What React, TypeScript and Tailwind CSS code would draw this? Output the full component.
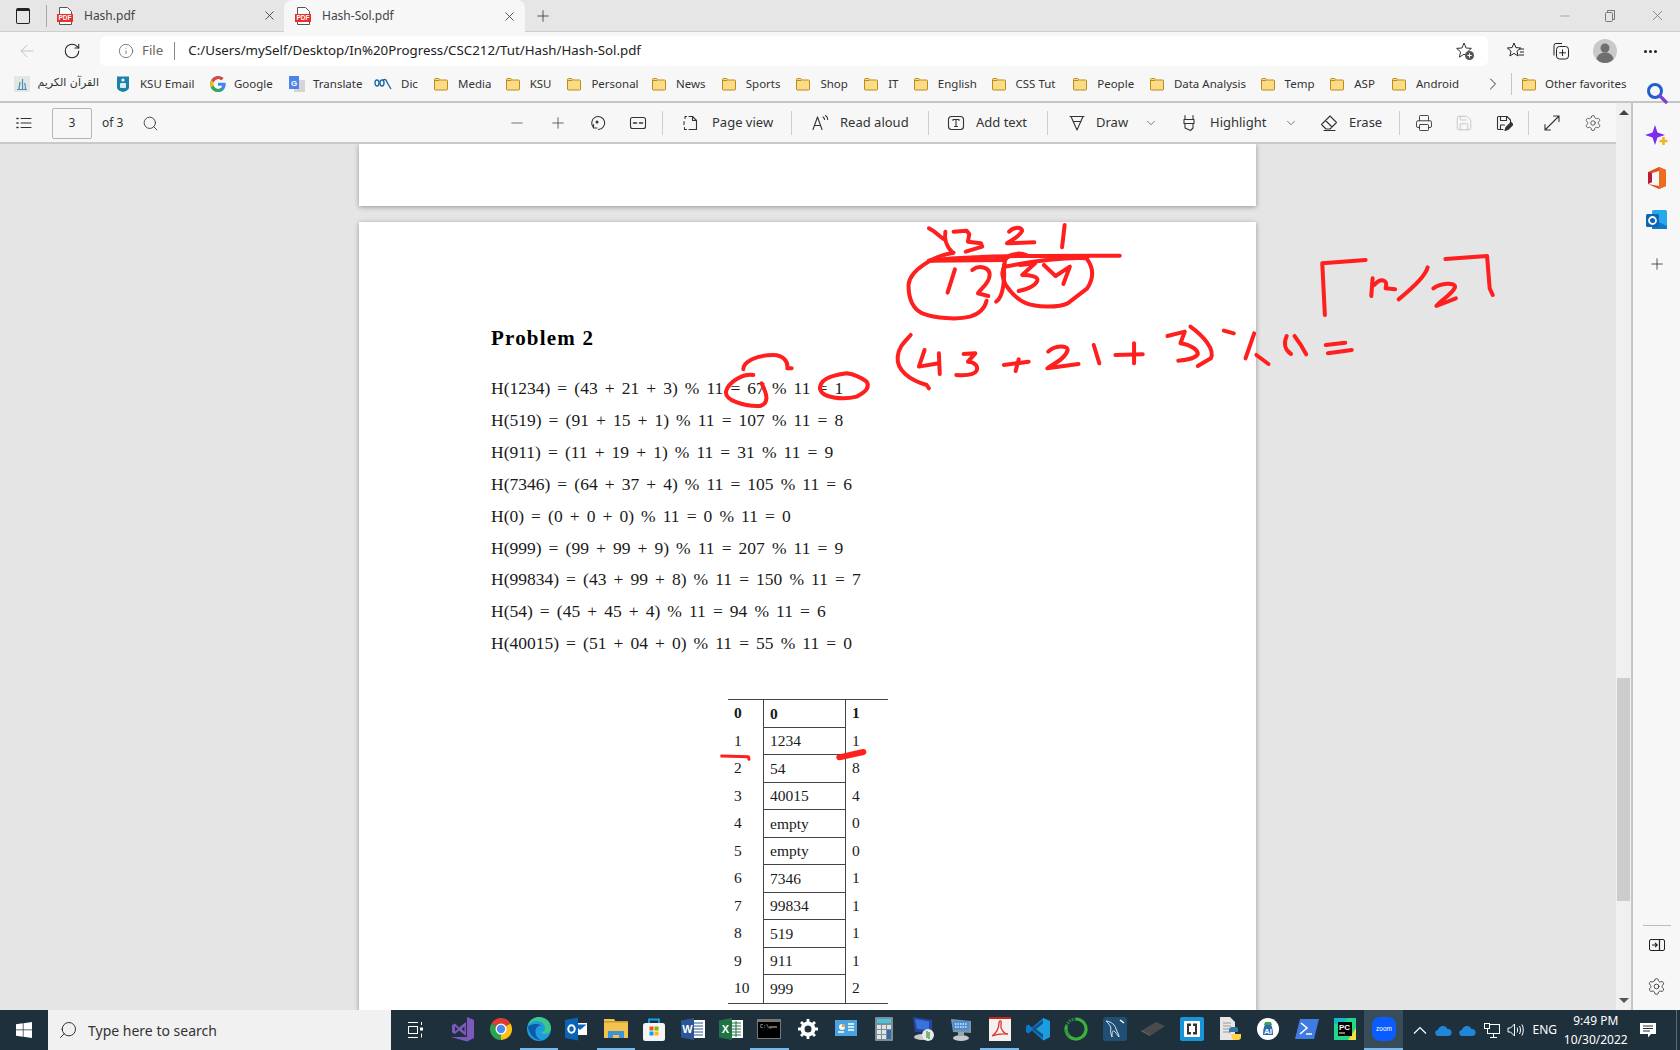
import {
  ArrowLeft,
  ChevronDown,
  ChevronRight,
  Info,
  Minus,
  Plus,
  Printer,
  RotateCw,
  Search,
  Settings,
  Save,
  X,
} from "lucide-react";

const lines = [
  "H(1234) = (43 + 21 + 3) % 11 = 67 % 11 = 1",
  "H(519) = (91 + 15 + 1) % 11 = 107 % 11 = 8",
  "H(911) = (11 + 19 + 1) % 11 = 31 % 11 = 9",
  "H(7346) = (64 + 37 + 4) % 11 = 105 % 11 = 6",
  "H(0) = (0 + 0 + 0) % 11 = 0 % 11 = 0",
  "H(999) = (99 + 99 + 9) % 11 = 207 % 11 = 9",
  "H(99834) = (43 + 99 + 8) % 11 = 150 % 11 = 7",
  "H(54) = (45 + 45 + 4) % 11 = 94 % 11 = 6",
  "H(40015) = (51 + 04 + 0) % 11 = 55 % 11 = 0",
];

const rows = [
  ["0", "0", "1"],
  ["1", "1234", "1"],
  ["2", "54", "8"],
  ["3", "40015", "4"],
  ["4", "empty", "0"],
  ["5", "empty", "0"],
  ["6", "7346", "1"],
  ["7", "99834", "1"],
  ["8", "519", "1"],
  ["9", "911", "1"],
  ["10", "999", "2"],
];

const folders = [
  ["Media", "w-[31px]"],
  ["KSU", "w-[21px]"],
  ["Personal", "w-[44px]"],
  ["News", "w-[29px]"],
  ["Sports", "w-[34px]"],
  ["Shop", "w-[27px]"],
  ["IT", "w-[9px]"],
  ["English", "w-[37px]"],
  ["CSS Tut", "w-[41px]"],
  ["People", "w-[36px]"],
  ["Data Analysis", "w-[70px]"],
  ["Temp", "w-[29px]"],
  ["ASP", "w-[21px]"],
  ["Android", "w-[42px]"],
];

const strokes = [
  "M205 55C220 65 230 80 240 88",
  "M243 65C240 85 245 110 260 128",
  "M262 65L292 62L298 72L295 95L325 100L328 110L290 125",
  "M390 65C400 50 420 50 420 62C415 80 395 90 385 100L448 97",
  "M518 45L512 112",
  "M205 152C300 135 500 137 645 137",
  "M205 152L380 150",
  "M380 170C420 160 500 140 570 145",
  "M262 128C220 135 160 180 158 225C158 260 165 295 190 310C220 325 270 330 300 320C325 310 335 290 338 272",
  "M265 178L248 248",
  "M305 180C320 165 345 170 345 195C345 220 325 235 318 250L342 258",
  "M378 165C380 200 378 260 360 275",
  "M380 165C375 135 410 125 430 135",
  "M570 148C585 175 585 205 570 235L525 280C500 295 450 290 430 280C410 270 395 250 382 225C375 205 370 185 380 165",
  "M415 165L450 160L420 195C440 195 458 200 455 212C450 228 430 238 412 243",
  "M470 165L497 198L530 170L515 222",
  "M163 375C150 395 135 410 133 440C130 480 160 510 200 525L205 535",
  "M195 420L182 470L228 460",
  "M228 430L230 492",
  "M285 432L312 430L295 455C310 455 320 470 315 482C310 495 290 497 268 495",
  "M378 465L435 455",
  "M412 448L405 483",
  "M480 425C495 405 525 405 525 420C520 445 495 460 478 475L550 462",
  "M585 405L598 460",
  "M635 435L698 433",
  "M678 400L678 460",
  "M755 378L795 365L785 400C810 405 825 420 825 432C820 445 800 450 780 452",
  "M808 350C840 380 865 420 855 445L825 468",
  "M885 362L908 370",
  "M955 370L935 445",
  "M960 435L988 462",
  "M1030 378C1022 400 1026 420 1040 432",
  "M1048 378C1058 395 1068 415 1075 433",
  "M1120 405L1165 398",
  "M1125 430L1180 420",
  "M1212 150L1112 160L1118 315",
  "M1228 205L1225 258",
  "M1232 225C1245 205 1265 205 1258 235L1280 238",
  "M1355 172C1350 200 1310 245 1288 268",
  "M1368 235C1385 220 1420 215 1418 232C1410 255 1385 270 1375 288L1420 265",
  "M1396 147L1492 138L1498 235L1505 255",
];

function Folder() {
  return (
    <svg width="16" height="16" viewBox="0 0 16 16" className="shrink-0">
      <path
        d="M1.5 3.5a1 1 0 0 1 1-1h3.2l1.5 1.5h6.3a1 1 0 0 1 1 1v8a1 1 0 0 1-1 1h-11a1 1 0 0 1-1-1z"
        fill="#fbdc84"
        stroke="#b98c1c"
      />
      <path d="M1.5 4.5h5" stroke="#b98c1c" />
    </svg>
  );
}

function PdfIcon() {
  return (
    <svg width="16" height="18" viewBox="0 0 16 18" className="shrink-0">
      <path d="M2.5.5h8l4 4v13h-12z" fill="#fff" stroke="#555" />
      <rect x="0" y="7" width="16" height="8" fill="#e5312e" />
      <text x="8" y="13.4" fontSize="6.5" fontWeight="700" fill="#fff" textAnchor="middle" fontFamily="Liberation Sans">
        PDF
      </text>
    </svg>
  );
}

function Sep() {
  return <div className="h-[24px] w-px shrink-0 bg-[#cfcfcf]" />;
}

function Ico({ children, size = 18 }: { children: React.ReactNode; size?: number }) {
  return (
    <svg
      width={size}
      height={size}
      viewBox="0 0 18 18"
      fill="none"
      stroke="#333"
      strokeWidth="1.1"
      strokeLinecap="round"
      strokeLinejoin="round"
      className="shrink-0"
    >
      {children}
    </svg>
  );
}

function TabStrip() {
  return (
    <div className="flex h-8 items-center border-b border-[#cdcdcd] bg-[#e6e6e6] text-[12px] text-[#444]">
      <div className="ml-[16px] h-[16px] w-[14px] shrink-0 rounded-[2px] border border-t-[3px] border-[#222]" />
      <div className="ml-[16px] h-[22px] w-px bg-[#a8a8a8]" />
      <div className="ml-[10px] flex w-[227px] items-center">
        <PdfIcon />
        <span className="ml-[11px]">Hash.pdf</span>
        <X size={15} strokeWidth={1.3} className="mr-[7px] ml-auto text-[#333]" />
      </div>
      <div className="flex h-[32px] w-[241px] items-center self-start rounded-t-lg bg-[#f7f7f7] pl-[11px]">
        <PdfIcon />
        <span className="ml-[11px]">Hash-Sol.pdf</span>
        <X size={15} strokeWidth={1.3} className="mr-[8px] ml-auto text-[#333]" />
      </div>
      <Plus size={18} strokeWidth={1.1} className="ml-[9px] text-[#333]" />
      <Minus size={14} strokeWidth={1} className="ml-[1006px] text-[#777]" />
      <svg width="12" height="14" viewBox="0 0 12 14" fill="none" stroke="#777" className="ml-[32px] shrink-0">
        <rect x="1.5" y="3.5" width="7" height="9" rx="1" />
        <path d="M3.5 3V1.5h7v9H9" />
      </svg>
      <X size={17} strokeWidth={1} className="ml-[33px] text-[#666]" />
    </div>
  );
}

function AddressRow() {
  return (
    <div className="flex h-[36px] items-center bg-[#f7f7f7] pt-[2px]">
      <ArrowLeft size={20} strokeWidth={1.1} className="ml-[17px] text-[#bdbdbd]" />
      <RotateCw size={18} strokeWidth={1.4} className="ml-[26px] text-[#222]" />
      <div className="ml-[19px] flex h-[30px] w-[1388px] items-center rounded-md bg-white text-[13.3px]">
        <Info size={16} strokeWidth={1.1} className="ml-[18px] text-[#555]" />
        <span className="ml-[8px] text-[#666]">File</span>
        <div className="ml-[11px] h-[18px] w-px bg-[#888]" />
        <span className="ml-[13px] w-[450px] whitespace-nowrap text-[#222]">
          C:/Users/mySelf/Desktop/In%20Progress/CSC212/Tut/Hash/Hash-Sol.pdf
        </span>
        <svg width="20" height="20" viewBox="0 0 20 20" fill="none" className="mr-[13px] ml-auto shrink-0">
          <path d="M9 2l2.1 5 5.3.4-4 3.5 1.2 5.2L9 13.2l-4.6 2.9 1.2-5.2-4-3.5L7 7z" stroke="#333" strokeLinejoin="round" />
          <circle cx="14.5" cy="14.5" r="4.5" fill="#555" />
          <path d="M14.5 12.3v4.4M12.3 14.5h4.4" stroke="#fff" />
        </svg>
      </div>
      <svg width="20" height="20" viewBox="0 0 20 20" fill="none" stroke="#222" strokeLinejoin="round" className="ml-[18px] shrink-0">
        <path d="M8 2l1.9 4.6 4.8.4-3.7 3.2 1.1 4.8L8 12.4l-4.1 2.6L5 10.2 1.3 7l4.8-.4z" />
        <path d="M13 8h5M14 11h4M13 14h5" />
      </svg>
      <svg width="20" height="20" viewBox="0 0 20 20" fill="none" stroke="#222" className="ml-[24px] shrink-0">
        <path d="M4 14.5V4.5a2 2 0 0 1 2-2h6" />
        <rect x="6.5" y="5.5" width="12" height="12.5" rx="3" />
        <path d="M12.5 8.5v6.5M9.2 11.8h6.6" />
      </svg>
      <svg width="24" height="24" viewBox="0 0 24 24" className="ml-[23px] shrink-0">
        <circle cx="12" cy="12" r="12" fill="#c9c9c9" />
        <circle cx="12" cy="9" r="4.5" fill="#6f6f6f" />
        <path d="M3.5 20c1-5 5-6.5 8.5-6.5S19.5 15 20.5 20c-2 2.5-5 4-8.5 4s-6.5-1.5-8.5-4z" fill="#6f6f6f" />
      </svg>
      <div className="ml-[27px] flex gap-[2px]">
        <div className="size-[3px] rounded-full bg-[#222]" />
        <div className="size-[3px] rounded-full bg-[#222]" />
        <div className="size-[3px] rounded-full bg-[#222]" />
      </div>
    </div>
  );
}

function BookmarkRow() {
  return (
    <div className="flex h-[35px] items-center border-b-2 border-[#c6c6c6] bg-[#f7f7f7] pb-[2px] text-[11.5px] text-[#333]">
      <svg width="16" height="16" viewBox="0 0 16 16" className="ml-[14px] shrink-0">
        <rect width="16" height="16" fill="#e2e6e4" />
        <path d="M5 13c0-3 1-5 1-7M8.5 13V3M11.5 13c0-2 0-4-1-6M3 13.5h10" stroke="#4a8fb5" strokeWidth="1.2" fill="none" />
      </svg>
      <span className="ml-[7px] w-[62px] font-['DejaVu_Sans',sans-serif] text-[11px] whitespace-nowrap" dir="rtl">
        القرآن الكريم
      </span>
      <svg width="16" height="18" viewBox="0 0 16 18" className="ml-[16px] shrink-0">
        <path d="M2 1.5h12v11c0 2-3 4-6 4.500-3-.5-6-2.500-6-4.500z" fill="#1b83a8" />
        <circle cx="8" cy="5" r="1.6" fill="#fff" />
        <rect x="5" y="8" width="6" height="5" rx="1" fill="#d8eef5" />
      </svg>
      <span className="ml-[9px] w-[53px] whitespace-nowrap">KSU Email</span>
      <svg width="16" height="16" viewBox="0 0 16 16" className="ml-[17px] shrink-0">
        <path d="M15.5 6.7H8v3h4.3C11.8 11.6 10.1 13 8 13a5 5 0 0 1 0-10c1.3 0 2.4.5 3.3 1.3l2.2-2.2A8 8 0 1 0 8 16c4.4 0 7.7-3.1 7.7-8 0-.4 0-.9-.2-1.3z" fill="#4285f4" />
        <path d="M1.3 4.3l2.5 1.900A5 5 0 0 1 8 3c1.300 0 2.400.5 3.300 1.300l2.200-2.200A8 8 0 0 0 1.300 4.300z" fill="#ea4335" />
        <path d="M.9 11.500l2.700-2.100A5 5 0 0 1 3.400 8c0-.6.1-1.200.4-1.800L1.300 4.300a8 8 0 0 0-.4 7.200z" fill="#fbbc05" />
        <path d="M8 16c2.200 0 4-.7 5.400-2l-2.600-2.100c-.7.6-1.700 1.100-2.800 1.100-2 0-3.700-1.500-4.400-3.600L.9 11.500A8 8 0 0 0 8 16z" fill="#34a853" />
      </svg>
      <span className="ml-[8px] w-[38px] whitespace-nowrap">Google</span>
      <svg width="16" height="16" viewBox="0 0 16 16" className="ml-[17px] shrink-0">
        <rect x="5" y="4" width="11" height="12" fill="#d5d5d5" />
        <rect width="10" height="13" fill="#4d84e8" />
        <text x="5" y="9.5" fontSize="8" fontWeight="700" fill="#fff" textAnchor="middle" fontFamily="Liberation Sans">G</text>
      </svg>
      <span className="ml-[8px] w-[46px] whitespace-nowrap">Translate</span>
      <svg width="18" height="12" viewBox="0 0 18 12" fill="none" stroke="#1c6aa5" strokeWidth="1.4" className="ml-[15px] shrink-0">
        <ellipse cx="3" cy="5" rx="2" ry="3" />
        <ellipse cx="8" cy="5" rx="2" ry="3" />
        <path d="M9 2c3-2 4 2 5 4l3 5" />
      </svg>
      <span className="ml-[9px] w-[16px] whitespace-nowrap">Dic</span>
      <div className="ml-[16px] flex gap-[15.7px]">
        {folders.map(([label, width]) => (
          <div key={label} className="flex items-center gap-[9px]">
            <Folder />
            <span className={`${width} whitespace-nowrap`}>{label}</span>
          </div>
        ))}
      </div>
      <ChevronRight size={20} strokeWidth={1.2} className="ml-[25px] text-[#333]" />
      <div className="ml-[8px] h-[22px] w-px bg-[#c6c6c6]" />
      <div className="ml-[9px]">
        <Folder />
      </div>
      <span className="ml-[8px] whitespace-nowrap">Other favorites</span>
    </div>
  );
}

function PdfToolbar() {
  return (
    <div className="flex h-[41px] shrink-0 items-center border-b-2 border-[#c9c9c9] bg-[#f7f7f7] pt-px text-[13px] whitespace-nowrap text-[#333]">
      <div className="ml-[15px]">
        <Ico>
          <path d="M6 4.5h10M6 9h10M6 13.5h10" />
          <path d="M2 4.5h1M2 9h1M2 13.5h1" strokeWidth="1.6" />
        </Ico>
      </div>
      <div className="ml-[19px] flex h-[31px] w-10 items-center justify-center rounded-[2px] border border-[#b5b5b5] text-[12px]">3</div>
      <span className="ml-[10px] w-[22px] text-[12px]">of 3</span>
      <Search size={17} strokeWidth={1.2} className="ml-[18px]" />
      <Minus size={18} strokeWidth={1.4} className="ml-[349px] text-[#777]" />
      <Plus size={18} strokeWidth={1.2} className="ml-[23px] text-[#555]" />
      <div className="ml-[21px]">
        <Ico>
          <path d="M10.5 15.5a6.5 6.5 0 1 0-5-2" />
          <path d="M5.5 10.5v3.5H9" />
          <circle cx="9" cy="8" r="1" fill="#333" />
        </Ico>
      </div>
      <div className="ml-[23px]">
        <Ico>
          <rect x="1.5" y="3.5" width="15" height="11" rx="2" />
          <path d="M4.5 9h3M13.5 9h-3" strokeWidth="1.5" />
        </Ico>
      </div>
      <div className="ml-[15px]"><Sep /></div>
      <div className="ml-[19px]">
        <Ico>
          <path d="M7 2.5h3.5l4 4v9H7" />
          <path d="M10.5 2.5v4h4" />
          <path d="M4.5 2.5H3v2M2 7.5v3M2.5 13.5v2h2" />
        </Ico>
      </div>
      <span className="ml-[12px] w-[60px]">Page view</span>
      <div className="ml-[19px]"><Sep /></div>
      <div className="ml-[19px]">
        <Ico>
          <path d="M2 15.5L6.5 3l4.5 12.5M3.5 11.5h6" />
          <path d="M12 3c1 .6 1.5 1.5 1.5 2.5M14.5 1.5c1.5 1 2.2 2.5 2.2 4" />
        </Ico>
      </div>
      <span className="ml-[11px] w-[69px]">Read aloud</span>
      <div className="ml-[19px]"><Sep /></div>
      <div className="ml-[18px]">
        <Ico>
          <rect x="1.5" y="2.5" width="15" height="13" rx="3" />
          <path d="M6 6.5V5.5h6v1M9 5.5v7M7.5 12.5h3" />
        </Ico>
      </div>
      <span className="ml-[11px] w-[52px]">Add text</span>
      <div className="ml-[19px]"><Sep /></div>
      <div className="ml-[20px]">
        <Ico>
          <path d="M2 2.5h14M3 2.5l6 13.5 6-13.5M5 7.5h8" />
        </Ico>
      </div>
      <span className="ml-[10px] w-[32px]">Draw</span>
      <ChevronDown size={14} strokeWidth={1.1} className="ml-[16px]" />
      <div className="ml-[22px]">
        <Ico>
          <path d="M5 1.5v4h8v-4M4 5.5h10v4H4zM5 9.5v4.500l5.500 2.500 2.500-2.500V9.500" />
        </Ico>
      </div>
      <span className="ml-[12px] w-[57px]">Highlight</span>
      <ChevronDown size={14} strokeWidth={1.1} className="ml-[17px]" />
      <div className="ml-[22px]">
        <Ico>
          <path d="M1.5 10.5L10 2l6.5 6.5-6.5 6.5H6zM5.5 6.5l6.5 6.5M4 16.5h11" />
        </Ico>
      </div>
      <span className="ml-[11px] w-[32px]">Erase</span>
      <div className="ml-[18px]"><Sep /></div>
      <Printer size={18} strokeWidth={1.2} className="ml-[15px]" />
      <Save size={18} strokeWidth={1} className="ml-[22px] text-[#b8b8b8]" />
      <div className="ml-[22px]">
        <Ico>
          <path d="M8 15.5H3.5a1 1 0 0 1-1-1v-11a1 1 0 0 1 1-1H12l3.5 3.5v3" />
          <path d="M5.5 2.5v4h6v-4M5.5 15v-4h4" />
          <path d="M10 16.5l1-3 5-5 2 2-5 5z" fill="#333" />
        </Ico>
      </div>
      <div className="ml-[15px]"><Sep /></div>
      <div className="ml-[14px]">
        <Ico>
          <path d="M2 16L16 2M10.5 2H16v5.5M2 10.5V16h5.5" />
        </Ico>
      </div>
      <Settings size={18} strokeWidth={1} className="ml-[23px]" />
    </div>
  );
}

function PageContent() {
  return (
    <div className="flex h-[820px] w-[897px] shrink-0 flex-col bg-white pt-[100px] pl-[132px] font-['Liberation_Serif',serif] text-[#1a1a1a] shadow-[0_1px_5px_rgba(0,0,0,0.35)]">
      <h2 className="text-[21px] leading-[32px] font-bold tracking-[1.2px] text-black">Problem 2</h2>
      <div className="mt-[19px] flex flex-col text-[17.5px] leading-[31.9px] [word-spacing:2.7px]">
        {lines.map((line) => (
          <div key={line} className="whitespace-nowrap">{line}</div>
        ))}
      </div>
      <div className="mt-[39px] ml-[237px] flex w-[160px] flex-col border-y border-[#444] text-[15.5px]">
        {rows.map(([a, b, c], i) => (
          <div key={a} className={`grid h-[27.5px] grid-cols-[35px_83px_42px] items-center ${i === 0 ? "font-bold" : ""}`}>
            <div className="pb-[2px] pl-[6px]">{a}</div>
            <div className={`flex h-full items-center border-x border-[#444] pl-[6px] ${i < 10 ? "border-b" : ""}`}>{b}</div>
            <div className="pb-[2px] pl-[6px]">{c}</div>
          </div>
        ))}
      </div>
    </div>
  );
}

function Scrollbar() {
  return (
    <div className="flex w-[17px] shrink-0 flex-col items-center border-r-2 border-[#c6c6c6] bg-[#f0f0f0] pt-[7px] pb-[7px]">
      <div className="size-0 border-x-[5px] border-b-[5px] border-x-transparent border-b-[#444]" />
      <div className="mt-[563px] h-[223px] w-[13px] bg-[#cdcdcd]" />
      <div className="mt-auto size-0 border-x-[5px] border-t-[5px] border-x-transparent border-t-[#555]" />
    </div>
  );
}

function SideBar() {
  return (
    <div className="flex w-[47px] shrink-0 flex-col items-center bg-[#f7f7f7]">
      <svg width="22" height="22" viewBox="0 0 22 22" fill="none" className="-mt-[21px]">
        <circle cx="9" cy="9" r="6.5" stroke="#1f5fd0" strokeWidth="3" />
        <path d="M14 14l6 6" stroke="#7a3fd4" strokeWidth="3.2" strokeLinecap="round" />
      </svg>
      <svg width="24" height="24" viewBox="0 0 24 24" className="mt-[20px]">
        <path d="M10 1l2.5 7.5L20 11l-7.5 2.5L10 21l-2.5-7.5L0 11l7.5-2.5z" fill="#7b2cf0" />
        <path d="M18.5 13v8M14.5 17h8" stroke="#f5b324" strokeWidth="2.6" />
      </svg>
      <svg width="18" height="22" viewBox="0 0 18 22" className="mt-[19px]">
        <path d="M0 5l11-5 7 3v16l-7 3-11-5 11 2V4L4 6v9l-4 2z" fill="#e2501f" />
        <path d="M0 5l4 1v9l-4 2z" fill="#b81c3c" />
        <path d="M11 0l7 3v16l-7 3z" fill="#ef6c1f" />
      </svg>
      <svg width="22" height="22" viewBox="0 0 22 22" className="mt-[20px]">
        <rect x="6" y="1" width="15" height="19" rx="1.5" fill="#28a8ea" />
        <path d="M6 10l15 7v3H6z" fill="#0f78c9" />
        <rect x="0" y="5" width="13" height="13" rx="1.5" fill="#0c66b5" />
        <circle cx="6.5" cy="11.5" r="3.5" fill="none" stroke="#fff" strokeWidth="1.8" />
      </svg>
      <Plus size={18} strokeWidth={1} className="mt-[24px] text-[#222]" />
      <div className="mt-auto w-[28px] border-t border-[#bcbcbc]" />
      <svg width="18" height="14" viewBox="0 0 18 14" fill="none" stroke="#222" className="mt-[13px]">
        <rect x="1.5" y=".5" width="15" height="11" rx="1.5" />
        <path d="M11.5 .5v11M4 6h5M7 3.8L9.2 6 7 8.2" strokeWidth="1.2" />
      </svg>
      <Settings size={19} strokeWidth={1} className="mt-[24px] mb-[14px] text-[#222]" />
    </div>
  );
}

function TaskApp({ children, active }: { children?: React.ReactNode; active?: boolean }) {
  return (
    <div
      className={`flex h-10 w-[38.4px] shrink-0 items-center justify-center border-b-[2px] ${
        active ? "border-[#76b9ed]" : "border-transparent"
      }`}
    >
      {children}
    </div>
  );
}

function Taskbar() {
  const font = "Liberation Sans";
  return (
    <div className="flex h-10 shrink-0 items-center bg-[#1d303c] text-white">
      <div className="flex w-12 justify-center">
        <svg width="16" height="16" viewBox="0 0 16 16" fill="#fff">
          <path d="M0 2.3l6.8-1V7.5H0zM7.5 1.2L16 0v7.5H7.5zM0 8.3h6.8v6.4l-6.8-1zM7.5 8.3H16V16l-8.5-1.200z" />
        </svg>
      </div>
      <div className="flex h-10 w-[343px] items-center bg-[#f1f1f1] text-[14px] text-[#333]">
        <Search size={20} strokeWidth={1.1} className="ml-[10px] -scale-x-100 text-[#222]" />
        <span className="ml-[10px]">Type here to search</span>
      </div>
      <div className="mr-[4px] flex w-12 justify-center">
        <svg width="16" height="18" viewBox="0 0 16 18" fill="none" stroke="#fff">
          <path d="M1 1.5h10M1 16.5h10" />
          <rect x="1.5" y="5.5" width="9" height="7" />
          <path d="M14.5 1v3M14.5 12.5v4" />
          <rect x="13" y="6.5" width="3" height="3" fill="#fff" stroke="none" />
        </svg>
      </div>
      <TaskApp>
        <svg width="24" height="26" viewBox="0 0 24 26">
          <path d="M17 1l7 3v18l-7 3.5L1 21l16 0z" fill="#7f58bd" />
          <path d="M2 9l3-1.5 4 4L16 6v14l-7-5.5-4 3.5-3-1.5z" fill="#7f58bd" />
          <path d="M5 10.5v5L8 13zM11.5 13l3 2.5v-5z" fill="#1d303c" />
        </svg>
      </TaskApp>
      <TaskApp>
        <svg width="24" height="24" viewBox="0 0 24 24">
          <path d="M12 12L2.47 6.5A11 11 0 0 1 21.53 6.5z" fill="#df3b30" />
          <path d="M12 12l9.53-5.5A11 11 0 0 1 12 23z" fill="#fbc116" />
          <path d="M12 12v11A11 11 0 0 1 2.47 6.5z" fill="#2ca24c" />
          <circle cx="12" cy="12" r="5.5" fill="#fff" />
          <circle cx="12" cy="12" r="4.2" fill="#4a8af4" />
        </svg>
      </TaskApp>
      <TaskApp active>
        <svg width="24" height="24" viewBox="0 0 24 24">
          <circle cx="12" cy="12" r="12" fill="#1d9de0" />
          <path d="M1 8C3 2 8 0 12 0c7 0 12 5 12 11 0 3-2 6-6 6-2 0-4-1-4-2 3 0 4-2 4-4 0-4-4-7-8-7S4 6 1 8z" fill="#3cc68a" />
          <path d="M1 10c1 6 5 13 14 13.5-5-2-7-6-6.5-10 .3-3 3-5 6-5-6-3-12-1-13.5 1.5z" fill="#0d5aa8" />
        </svg>
      </TaskApp>
      <TaskApp>
        <svg width="24" height="24" viewBox="0 0 24 24">
          <rect x="8" y="6" width="14" height="12" fill="#fff" />
          <path d="M9 7.5h12.5L15 13z" fill="#0f66b8" />
          <path d="M0 3l13-2.5v23L0 21z" fill="#0a63b4" />
          <ellipse cx="6.5" cy="12" rx="3.2" ry="3.8" fill="none" stroke="#fff" strokeWidth="2" />
        </svg>
      </TaskApp>
      <TaskApp active>
        <svg width="24" height="22" viewBox="0 0 24 22">
          <path d="M0 1h10l2 3h12v16H0z" fill="#f4c34d" />
          <rect x="0" y="3" width="24" height="1.5" fill="#c99a2e" />
          <path d="M4 20v-7h16v7h-5v-3H9v3z" fill="#3a94dc" />
        </svg>
      </TaskApp>
      <TaskApp>
        <svg width="24" height="24" viewBox="0 0 24 24">
          <path d="M7 6V2.5h10V6" fill="none" stroke="#16a4e8" strokeWidth="1.8" />
          <rect x="1" y="6" width="22" height="18" rx="2.5" fill="#f4f4f4" />
          <rect x="7.5" y="9.5" width="4" height="4" fill="#f25022" />
          <rect x="12.5" y="9.5" width="4" height="4" fill="#7fba00" />
          <rect x="7.5" y="14.5" width="4" height="4" fill="#00a4ef" />
          <rect x="12.5" y="14.5" width="4" height="4" fill="#ffb900" />
        </svg>
      </TaskApp>
      <TaskApp>
        <svg width="24" height="22" viewBox="0 0 24 22">
          <rect x="10" y="2" width="14" height="18" fill="#fff" />
          <path d="M13 5h9M13 8h9M13 11h9M13 14h9M13 17h9" stroke="#2b5797" />
          <path d="M0 2.5L13 0v22L0 19.5z" fill="#2b5797" />
          <text x="6.5" y="15" fontSize="11" fontWeight="700" fill="#fff" textAnchor="middle" fontFamily={font}>W</text>
        </svg>
      </TaskApp>
      <TaskApp>
        <svg width="24" height="22" viewBox="0 0 24 22">
          <rect x="10" y="2" width="14" height="18" fill="#fff" />
          <path d="M13 5h9M13 8h9M13 11h9M13 14h9M13 17h9M17 3v16" stroke="#217346" />
          <path d="M0 2.5L13 0v22L0 19.5z" fill="#217346" />
          <text x="6.5" y="15" fontSize="11" fontWeight="700" fill="#fff" textAnchor="middle" fontFamily={font}>X</text>
        </svg>
      </TaskApp>
      <TaskApp active>
        <svg width="24" height="20" viewBox="0 0 24 20">
          <rect width="24" height="20" fill="#777" />
          <rect x="1" y="3" width="22" height="16" fill="#000" />
          <text x="3" y="9" fontSize="5" fill="#ddd" fontFamily="Liberation Mono">C:\_</text>
          <path d="M12 8h8" stroke="#ccc" />
        </svg>
      </TaskApp>
      <TaskApp>
        <svg width="22" height="22" viewBox="0 0 22 22">
          <path d="M11 3.5a7.5 7.5 0 1 0 0 15 7.5 7.5 0 0 0 0-15zm0 4a3.5 3.5 0 1 1 0 7 3.5 3.5 0 0 1 0-7z" fill="#fff" />
          <path d="M11 1v4M11 17v4M1 11h4M17 11h4M4 4l3 3M15 15l3 3M18 4l-3 3M7 15l-3 3" stroke="#fff" strokeWidth="2.8" />
        </svg>
      </TaskApp>
      <TaskApp>
        <svg width="22" height="18" viewBox="0 0 22 18">
          <rect width="22" height="16" fill="#4aa3df" />
          <circle cx="7" cy="7" r="3" fill="#f4f4f4" />
          <path d="M7 7V4a3 3 0 0 1 3 3z" fill="#f0a030" />
          <path d="M13 4h6M13 7h6M13 10h6M3 12h6" stroke="#fff" strokeWidth="1.5" />
        </svg>
      </TaskApp>
      <TaskApp>
        <svg width="18" height="24" viewBox="0 0 18 24">
          <rect width="18" height="24" rx="1" fill="#7f8c96" />
          <rect x="2" y="2" width="14" height="4" fill="#45c4dc" />
          <path d="M2 8h4v4H2zM7 8h4v4H7zM12 8h4v4h-4zM2 13h4v4H2zM7 13h4v4H7zM2 18h4v4H2zM7 18h4v4H7z" fill="#dfe4e8" />
          <path d="M12 13h4v9h-4z" fill="#2f6ea5" />
        </svg>
      </TaskApp>
      <TaskApp>
        <svg width="24" height="26" viewBox="0 0 24 26">
          <path d="M2 1l19 3v13L4 16z" fill="#24489c" />
          <path d="M4 3l14 2.5V14L6 13z" fill="#3a72dc" />
          <ellipse cx="11" cy="21" rx="8" ry="3" fill="#c9c9c9" />
          <circle cx="17" cy="19" r="6" fill="#e9e9e9" />
          <path d="M16 15v7M18 16v7" stroke="#3c9a3c" strokeWidth="1.3" />
        </svg>
      </TaskApp>
      <TaskApp>
        <svg width="24" height="24" viewBox="0 0 24 24">
          <path d="M2 2l20 2v12L4 15z" fill="#7f94a8" />
          <rect x="4" y="4" width="16" height="9" fill="#4c8ed6" />
          <path d="M6 7h12M6 10h12" stroke="#dce8f5" strokeWidth="1.5" strokeDasharray="1.5 1" />
          <ellipse cx="12" cy="21" rx="8" ry="3" fill="#c4c9cd" />
          <rect x="9" y="15" width="6" height="4" fill="#9aa5ad" />
        </svg>
      </TaskApp>
      <TaskApp active>
        <svg width="22" height="24" viewBox="0 0 22 24">
          <rect width="22" height="24" fill="#f6f1ef" />
          <rect width="22" height="2" fill="#c9241c" />
          <path d="M3 19c4-2 7-8 7-13 0-3 3-3 2 1-1 5 3 10 7 10-5-.5-12 .5-16 2z" fill="none" stroke="#d8322a" strokeWidth="1.3" />
        </svg>
      </TaskApp>
      <TaskApp>
        <svg width="24" height="24" viewBox="0 0 24 24">
          <path d="M17 1l7 3v16l-7 3.5L6 13.5 2.5 16.5 0 15V9l2.5-1.5L6 10.5z" fill="#0b78c8" />
          <path d="M17 1l7 3v16l-7 3.5z" fill="#1d9de0" />
          <path d="M6 12l11-8.500v17z" fill="#1d303c" opacity="0.55" />
          <path d="M10 12l7-5.500v11z" fill="#1d9de0" />
        </svg>
      </TaskApp>
      <TaskApp>
        <svg width="24" height="24" viewBox="0 0 24 24" fill="none">
          <path d="M12 2a10 10 0 1 1-9.5 7" stroke="#3bb03b" strokeWidth="3.2" />
          <path d="M12 2a10 10 0 0 0-9.5 7M2 13a10 10 0 0 0 3 6" stroke="#2b8a3c" strokeWidth="3.2" strokeDasharray="1.5 1.2" />
        </svg>
      </TaskApp>
      <TaskApp>
        <svg width="24" height="24" viewBox="0 0 24 24">
          <rect width="24" height="24" rx="3" fill="#1f4f74" />
          <path d="M3 4c6 1 9 4 10 8 1 3 3 5 3 8-2-2-3-5-5-6-2-1-2 3-2 6-1-3-2-6-1-9-1-3-3-5-5-7z" fill="none" stroke="#d9e6ee" strokeWidth="1" />
          <path d="M17 3l4 3" stroke="#fff" strokeWidth="1.5" />
        </svg>
      </TaskApp>
      <TaskApp>
        <svg width="24" height="14" viewBox="0 0 24 14">
          <path d="M0 9L15 0l9 4-15 10z" fill="#4b4b4d" />
          <path d="M0 9l9 5v-1L1 8.5z" fill="#6a6a6c" />
        </svg>
      </TaskApp>
      <TaskApp>
        <svg width="24" height="24" viewBox="0 0 24 24">
          <rect width="24" height="24" rx="2" fill="#1a95d9" />
          <rect x="4" y="4" width="16" height="16" rx="1" fill="#fff" />
          <rect x="7" y="6.5" width="4" height="11" fill="#333" />
          <rect x="13" y="6.5" width="4" height="11" fill="#333" />
          <rect x="9" y="9" width="6" height="6" fill="#fff" />
        </svg>
      </TaskApp>
      <TaskApp>
        <svg width="24" height="24" viewBox="0 0 24 24">
          <path d="M2 0h10l5 5v18H2z" fill="#e6e6e6" />
          <path d="M5 6h8M5 9h8M5 12h6M5 15h6" stroke="#999" />
          <path d="M14 10h4a2 2 0 0 1 2 2v3h-7a2 2 0 0 0-2 2v-4a3 3 0 0 1 3-3z" fill="#3776ab" />
          <path d="M13 17h10v3a3 3 0 0 1-3 3h-3a3 3 0 0 1-3-3z" fill="#ffd343" />
        </svg>
      </TaskApp>
      <TaskApp>
        <svg width="22" height="22" viewBox="0 0 22 22">
          <circle cx="11" cy="11" r="11" fill="#fff" />
          <path d="M6 17c0-8 2-12 5-12s5 4 5 12z" fill="#2a6db5" />
          <path d="M8 4h6l1 3H7z" fill="#44a04c" />
          <text x="11" y="16" fontSize="8" fontWeight="700" fill="#fff" textAnchor="middle" fontFamily={font}>AI</text>
        </svg>
      </TaskApp>
      <TaskApp>
        <svg width="24" height="20" viewBox="0 0 24 20">
          <path d="M5 0h19l-5 20H0z" fill="#3f7be0" />
          <path d="M6 4l6 5-7 6M11 15h6" fill="none" stroke="#fff" strokeWidth="1.6" />
        </svg>
      </TaskApp>
      <TaskApp>
        <svg width="22" height="22" viewBox="0 0 22 22">
          <rect width="22" height="22" fill="#21d789" />
          <path d="M0 0h14L8 6H0z" fill="#14b8c4" />
          <path d="M22 10v12h-8z" fill="#f0e040" />
          <rect x="4" y="4" width="14" height="14" fill="#000" />
          <text x="5" y="12" fontSize="8" fontWeight="700" fill="#fff" fontFamily={font}>PC</text>
          <path d="M5 15h6" stroke="#fff" />
        </svg>
      </TaskApp>
      <div className="flex h-10 w-[38.4px] shrink-0 items-center justify-center border-b-[2px] border-[#76b9ed] bg-[#394c5a]">
        <svg width="24" height="24" viewBox="0 0 24 24">
          <rect width="24" height="24" rx="8" fill="#0b5cff" />
          <text x="12" y="14" fontSize="6.5" fill="#fff" textAnchor="middle" fontFamily={font}>zoom</text>
        </svg>
      </div>
      <div className="ml-[5px] flex w-[24px] justify-center">
        <svg width="14" height="8" viewBox="0 0 14 8" fill="none" stroke="#fff" strokeWidth="1.2"><path d="M1 7.5l6-6 6 6" /></svg>
      </div>
      <div className="flex w-[24px] justify-center">
        <svg width="17" height="11" viewBox="0 0 17 11" fill="#1f86d8"><path d="M3.5 11a3 3 0 0 1-.5-6 5 5 0 0 1 9.5-1A3.5 3.5 0 0 1 13.5 11z" /></svg>
      </div>
      <div className="flex w-[24px] justify-center">
        <svg width="17" height="11" viewBox="0 0 17 11" fill="#1f86d8"><path d="M3.5 11a3 3 0 0 1-.5-6 5 5 0 0 1 9.5-1A3.5 3.5 0 0 1 13.5 11z" /></svg>
      </div>
      <div className="flex w-[24px] justify-center">
        <svg width="16" height="15" viewBox="0 0 16 15" fill="none" stroke="#fff">
          <rect x="3.5" y="1.5" width="12" height="9" />
          <rect x=".5" y=".5" width="5" height="5" fill="#1d303c" />
          <path d="M9.5 10.5v3.5M6 14.5h7" />
        </svg>
      </div>
      <div className="flex w-[24px] justify-center">
        <svg width="17" height="14" viewBox="0 0 17 14" fill="none" stroke="#fff">
          <path d="M1 5v4h2.5L7.5 13V1L3.5 5z" />
          <path d="M10 4.5c.8 1.5.8 3.5 0 5M12.5 3c1.300 2.500 1.300 5.500 0 8M15 1.500c1.700 3.500 1.700 7.500 0 11" />
        </svg>
      </div>
      <div className="w-[34px] text-center text-[12px]">ENG</div>
      <div className="w-[68px] text-center text-[12px] leading-[19px] whitespace-nowrap">
        <div>9:49 PM</div>
        <div>10/30/2022</div>
      </div>
      <div className="flex w-[36px] justify-center">
        <svg width="16" height="15" viewBox="0 0 16 15">
          <path d="M0 0h16v11h-5l-3 3.5V11H0z" fill="#fff" />
          <path d="M3 3h10M3 5.5h10M3 8h7" stroke="#1d303c" />
        </svg>
      </div>
      <div className="ml-[10px] h-10 w-px bg-[#5c6d78]" />
    </div>
  );
}

function Ink() {
  return (
    <svg
      width="1680"
      height="1050"
      viewBox="0 0 1680 1050"
      fill="none"
      stroke="#ff1f1f"
      strokeWidth="4"
      strokeLinecap="round"
      strokeLinejoin="round"
      className="pointer-events-none absolute top-0 left-0"
    >
      <g transform="translate(840 210) scale(0.4337 0.3333)">
        {strokes.map((d) => (
          <path key={d} d={d} vectorEffect="non-scaling-stroke" />
        ))}
      </g>
      <g transform="translate(480 310) scale(0.3333)">
        <path d="M790 178C790 155 830 135 880 135C910 135 925 155 922 175L935 175" vectorEffect="non-scaling-stroke" />
        <path d="M820 195C790 190 745 215 738 245C735 270 790 290 840 288C870 280 860 250 845 220" vectorEffect="non-scaling-stroke" />
        <path d="M1100 190C1060 195 1020 205 1020 235C1025 265 1090 270 1130 260C1160 245 1170 230 1160 215C1140 200 1115 192 1100 190" vectorEffect="non-scaling-stroke" />
      </g>
      <g transform="translate(700 680) scale(0.3333)">
        <path d="M65 228L145 230L147 238" strokeWidth="3" vectorEffect="non-scaling-stroke" />
        <path d="M418 232L490 216" strokeWidth="6" vectorEffect="non-scaling-stroke" />
      </g>
    </svg>
  );
}

export default function App() {
  return (
    <div className="relative flex h-[1050px] w-[1680px] flex-col overflow-hidden bg-[#f7f7f7] font-['Noto_Sans',sans-serif]">
      <TabStrip />
      <AddressRow />
      <BookmarkRow />
      <div className="flex min-h-0 flex-1">
        <div className="flex min-w-0 flex-1 flex-col">
          <PdfToolbar />
          <div className="flex min-h-0 flex-1 flex-col items-center gap-[16px] overflow-hidden bg-[#e5e5e5] pr-px">
            <div className="h-[62px] w-[897px] shrink-0 bg-white shadow-[0_1px_5px_rgba(0,0,0,0.35)]" />
            <PageContent />
          </div>
        </div>
        <Scrollbar />
        <SideBar />
      </div>
      <Taskbar />
      <Ink />
    </div>
  );
}
